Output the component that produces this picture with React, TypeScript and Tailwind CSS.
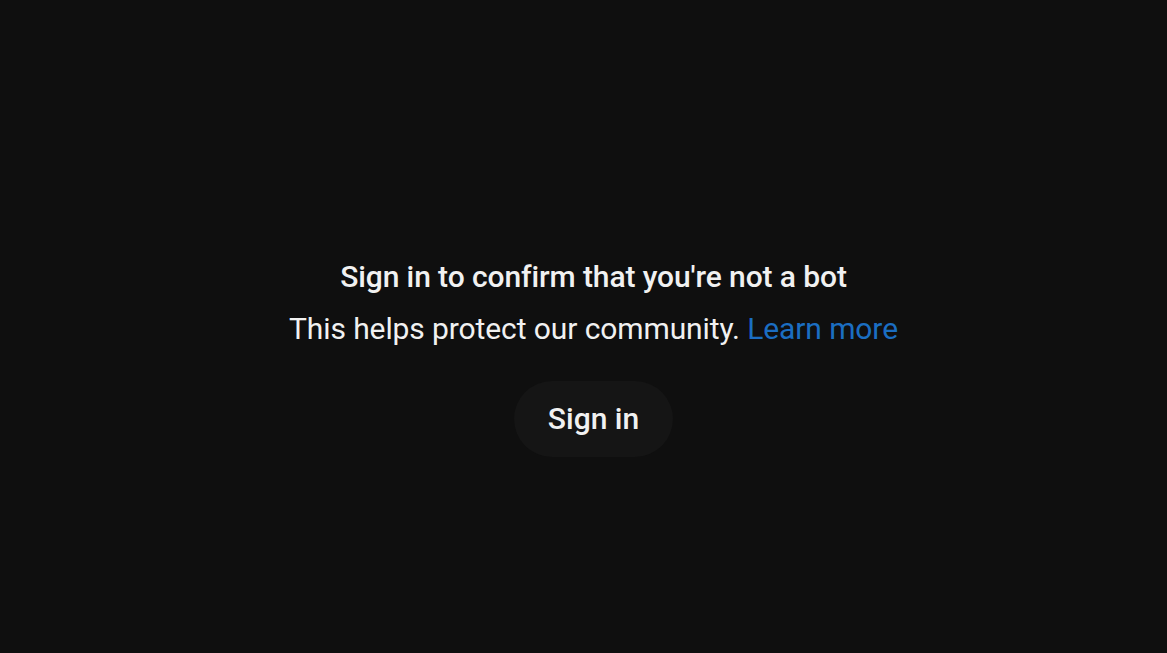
export default function App() {
    return (
        <div
            className="flex h-[653px] w-full flex-col items-center justify-center bg-[#0f0f0f] pl-[20px] text-[#f1f1f1]"
            style={{ fontFamily: "Roboto, Arial, sans-serif" }}
        >
            <div className="flex flex-col items-center pt-[60px]">
                <h1 className="text-[30px] font-medium leading-[40px] tracking-[-0.1px]">
                    Sign in to confirm that you're not a bot
                </h1>
                <p className="mt-[12px] text-[30px] leading-[40px] tracking-[-0.1px]">
                    This helps protect our community.{" "}
                    <a href="#" className="text-[#1b6ec2]">
                        Learn more
                    </a>
                </p>
                <button className="mt-[32px] h-[76px] rounded-full bg-[#151515] px-[34px] text-[30px] font-medium">
                    Sign in
                </button>
            </div>
        </div>
    );
}
